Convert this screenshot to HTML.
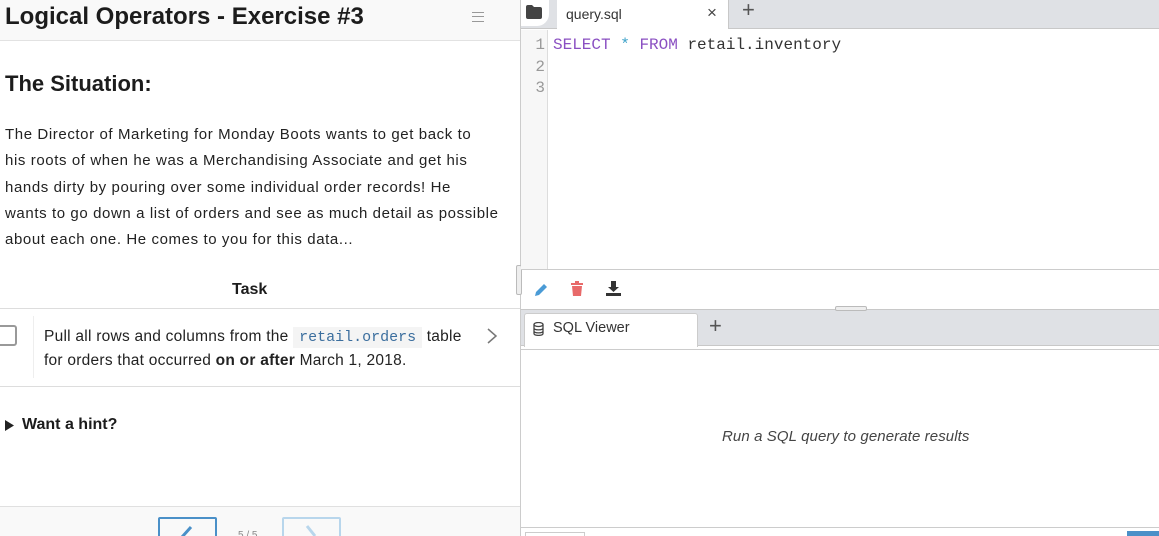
<!DOCTYPE html>
<html><head><style>
*{box-sizing:border-box;margin:0;padding:0}
html,body{width:1159px;height:536px;overflow:hidden}
body{font-family:"Liberation Sans",sans-serif;background:#fff;position:relative;color:#1c1c1c}
.abs{position:absolute;white-space:nowrap}
.mono{font-family:"Liberation Mono",monospace}
</style></head><body>
<!-- left panel -->
<div class="abs" style="left:0;top:0;width:520px;height:41px;background:#f9f9f9;border-bottom:1px solid #e2e2e2"></div>
<div class="abs" style="left:5px;top:3px;font-size:24px;font-weight:bold;letter-spacing:0">Logical Operators - Exercise #3</div>
<div class="abs" style="left:472px;top:12px;width:12px;height:10px;border-top:1px solid #999;border-bottom:1px solid #999"><div style="margin-top:3px;border-top:1px solid #999"></div></div>
<div class="abs" style="left:5px;top:71px;font-size:22px;font-weight:bold">The Situation:</div>
<div class="abs" style="left:5px;top:122px;font-size:15px;line-height:26.3px;color:#222;letter-spacing:0.6px">The Director of Marketing for Monday Boots wants to get back to<br>his roots of when he was a Merchandising Associate and get his<br>hands dirty by pouring over some individual order records! He<br>wants to go down a list of orders and see as much detail as possible<br>about each one. He comes to you for this data...</div>
<div class="abs" style="left:232px;top:281px;font-size:16px;font-weight:bold">Task</div>
<div class="abs" style="left:0;top:308px;width:520px;border-top:1px solid #ddd"></div>
<div class="abs" style="left:-4px;top:325px;width:21px;height:21px;border:2px solid #999;border-radius:3px"></div>
<div class="abs" style="left:33px;top:316px;height:62px;border-left:1px solid #eee"></div>
<div class="abs" style="left:44px;top:325px;font-size:15.5px;line-height:23px;color:#222;letter-spacing:0.25px">Pull all rows and columns from the <span class="mono" style="background:#f4f4f4;color:#3b6e9e;padding:2px 6px;font-size:15px;letter-spacing:0">retail.orders</span> table<br>for orders that occurred <b>on or after</b> March 1, 2018.</div>
<svg class="abs" style="left:486px;top:327px" width="12" height="18"><path d="M2 2l8 7-8 7" fill="none" stroke="#777" stroke-width="1.5"/></svg>
<div class="abs" style="left:0;top:386px;width:520px;border-top:1px solid #ddd"></div>
<svg class="abs" style="left:5px;top:420px" width="10" height="11"><path d="M0 0l9 5.5L0 11z" fill="#222"/></svg>
<div class="abs" style="left:22px;top:416px;font-size:16px;font-weight:bold">Want a hint?</div>
<div class="abs" style="left:0;top:506px;width:520px;height:30px;background:#f9f9f9;border-top:1px solid #e0e0e0"></div>
<div class="abs" style="left:158px;top:517px;width:59px;height:30px;border:2px solid #4a90c8;border-radius:2px"></div>
<svg class="abs" style="left:180px;top:525px" width="14" height="12"><path d="M2 12L11 2" stroke="#4a90c8" stroke-width="3"/></svg>
<div class="abs" style="left:282px;top:517px;width:59px;height:30px;border:2px solid #b8d6ec;border-radius:2px"></div>
<svg class="abs" style="left:304px;top:525px" width="14" height="12"><path d="M3 1l8 10" stroke="#b8d6ec" stroke-width="3"/></svg>
<div class="abs" style="left:238px;top:530px;font-size:10px;color:#888">5 / 5</div>
<div class="abs" style="left:520px;top:0;width:1px;height:536px;background:#ccc"></div>
<div class="abs" style="left:516px;top:265px;width:6px;height:30px;border:1px solid #bbb;border-radius:2px;background:#eee"></div>
<!-- right top tab bar -->
<div class="abs" style="left:521px;top:0;width:638px;height:29px;background:#dfe1e5;border-bottom:1px solid #c8c8c8"></div>
<div class="abs" style="left:521px;top:0;width:28px;height:26px;background:#fff;border-radius:0 0 12px 0"></div>
<svg class="abs" style="left:526px;top:5px" width="16" height="14"><path d="M0 2q0-2 2-2h4l2 2h6q2 0 2 2v8q0 2-2 2H2q-2 0-2-2z" fill="#444"/></svg>
<div class="abs" style="left:557px;top:0;width:172px;height:29px;background:#fff;border-right:1px solid #c8c8c8"></div>
<div class="abs" style="left:566px;top:6px;font-size:14px;color:#333">query.sql</div>
<div class="abs" style="left:707px;top:3px;font-size:17px;color:#444">×</div>
<div class="abs" style="left:742px;top:-3px;font-size:22px;color:#555">+</div>
<!-- editor -->
<div class="abs" style="left:521px;top:30px;width:27px;height:239px;background:#f7f7f7;border-right:1px solid #ddd"></div>
<div class="abs mono" style="left:521px;top:35px;width:24px;text-align:right;font-size:16px;line-height:21.5px;color:#999">1<br>2<br>3</div>
<div class="abs mono" style="left:553px;top:35px;font-size:16px;line-height:21.5px;color:#333"><span style="color:#8a4fc2">SELECT</span> <span style="color:#3aa0c8">*</span> <span style="color:#8a4fc2">FROM</span> retail.inventory</div>
<div class="abs" style="left:521px;top:269px;width:638px;border-top:1px solid #ccc"></div>
<svg class="abs" style="left:533px;top:282px" width="16" height="16"><path d="M2 14l1-4 8-8 3 3-8 8z" fill="#4a9bd6"/></svg>
<svg class="abs" style="left:570px;top:281px" width="14" height="16"><rect x="1" y="2" width="12" height="2" fill="#e86a6a"/><rect x="5" y="0" width="4" height="2" fill="#e86a6a"/><path d="M2 5h10l-1 10H3z" fill="#e86a6a"/></svg>
<svg class="abs" style="left:606px;top:281px" width="15" height="16"><path d="M5 0h5v6h3l-5.5 5L2 6h3z" fill="#333"/><rect x="0" y="12" width="15" height="3" fill="#333"/></svg>
<!-- bottom tab bar -->
<div class="abs" style="left:521px;top:309px;width:638px;height:37px;background:#dfe1e5;border-top:1px solid #c8c8c8;border-bottom:1px solid #c8c8c8"></div>
<div class="abs" style="left:835px;top:306px;width:32px;height:5px;border:1px solid #bbb;border-radius:2px;background:#eee"></div>
<div class="abs" style="left:524px;top:313px;width:174px;height:34px;background:#fff;border:1px solid #ccc;border-bottom:none;border-radius:3px 3px 0 0"></div>
<svg class="abs" style="left:533px;top:322px" width="11" height="14"><ellipse cx="5.5" cy="2.5" rx="4.5" ry="2" fill="none" stroke="#444" stroke-width="1.3"/><path d="M1 2.5v9c0 2.5 9 2.5 9 0v-9M1 6c0 2.5 9 2.5 9 0M1 9c0 2.5 9 2.5 9 0" fill="none" stroke="#444" stroke-width="1.3"/></svg>
<div class="abs" style="left:553px;top:320px;font-size:14.5px;color:#333">SQL Viewer</div>
<div class="abs" style="left:709px;top:313px;font-size:22px;color:#555">+</div>
<div class="abs" style="left:521px;top:349px;width:638px;border-top:1px solid #ccc"></div>
<div class="abs" style="left:722px;top:428px;font-size:15px;font-style:italic;color:#444;letter-spacing:0.1px">Run a SQL query to generate results</div>
<div class="abs" style="left:521px;top:527px;width:638px;border-top:1px solid #ccc"></div>
<div class="abs" style="left:525px;top:532px;width:60px;height:6px;border:1px solid #ccc;border-bottom:none"></div>
<div class="abs" style="left:1127px;top:531px;width:32px;height:5px;background:#4a90c8"></div>
</body></html>
